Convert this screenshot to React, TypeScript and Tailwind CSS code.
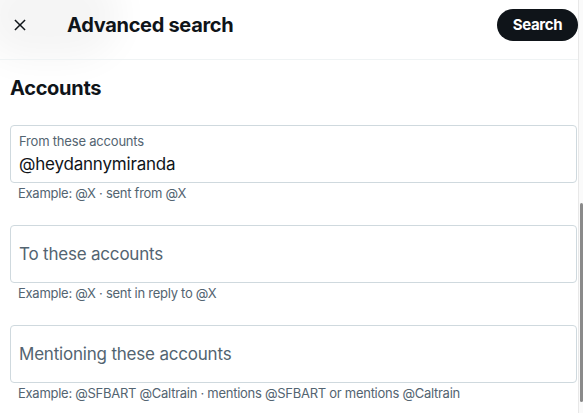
import React from "react";

function Field({ label, value, hint }: { label: string; value?: string; hint: string }) {
  return (
    <div className="flex flex-col">
      <div
        className={
          value
            ? "h-[58px] rounded-[4px] border border-[#cfd9de] px-[8px] pt-[7px] flex flex-col"
            : "h-[58px] rounded-[4px] border border-[#cfd9de] px-[8px] flex flex-col justify-center"
        }
      >
        {value ? (
          <>
            <div className="text-[13px] leading-[16px] text-[#536471] tracking-[-0.2px]">{label}</div>
            <div className="text-[17px] leading-[24px] text-[#0f1419] mt-[3px] tracking-[-0.2px]">{value}</div>
          </>
        ) : (
          <div className="text-[17px] leading-[24px] text-[#536471] tracking-[-0.2px]">{label}</div>
        )}
      </div>
      <div className="text-[13px] leading-[16px] text-[#536471] px-[8px] pt-[2px] tracking-[-0.27px]">{hint}</div>
    </div>
  );
}

export default function App() {
  return (
    <div
      className="relative w-[583px] h-[413px] bg-white overflow-hidden flex"
      style={{ fontFamily: "Inter, 'Noto Sans', sans-serif" }}
    >
      <div className="pointer-events-none absolute left-[-20px] top-[-30px] w-[140px] h-[90px] rounded-full bg-[#000] opacity-[0.04] blur-[18px]" />
      <div className="relative flex-1 flex flex-col">
        <div className="h-[60px] border-b border-[#eff3f4]">
          <div className="h-[50px] flex items-center">
            <div className="w-[40px] h-[40px] flex items-center justify-center">
              <svg width="18" height="18" viewBox="0 0 24 24" className="text-[#0f1419]">
                <path
                  fill="currentColor"
                  d="M10.59 12L4.54 5.96l1.42-1.42L12 10.59l6.04-6.05 1.42 1.42L13.41 12l6.05 6.04-1.42 1.42L12 13.41l-6.04 6.05-1.42-1.42L10.59 12z"
                />
              </svg>
            </div>
            <div className="ml-[27px] text-[20px] font-bold tracking-[-0.3px] text-[#0f1419] leading-[24px]">
              Advanced search
            </div>
            <div className="flex-1" />
            <button className="h-[32px] w-[81px] rounded-full bg-[#0f1419] text-white text-[15px] font-bold leading-[20px] tracking-[-0.3px]">
              Search
            </button>
          </div>
        </div>
        <div className="pl-[10px] pr-[1px] flex flex-col">
          <div className="h-[56px] flex items-center text-[20px] font-bold text-[#0f1419] tracking-[-0.3px]">
            Accounts
          </div>
          <div className="mt-[9px] flex flex-col gap-[24px]">
            <Field label="From these accounts" value="@heydannymiranda" hint="Example: @X · sent from @X" />
            <Field label="To these accounts" hint="Example: @X · sent in reply to @X" />
            <Field
              label="Mentioning these accounts"
              hint="Example: @SFBART @Caltrain · mentions @SFBART or mentions @Caltrain"
            />
          </div>
        </div>
      </div>
      <div className="relative w-[5px] border-l border-[#e8e8e8] bg-[#fafafa]">
        <div className="absolute left-[1px] top-[203px] w-[3px] h-[199px] rounded-full bg-[#8a8a8a]" />
      </div>
    </div>
  );
}
